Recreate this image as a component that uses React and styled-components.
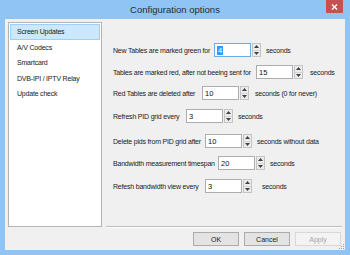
import React from "react";
import styled, { createGlobalStyle } from "styled-components";

const Global = createGlobalStyle`
  html, body { margin: 0; padding: 0; }
  body { width: 350px; height: 255px; overflow: hidden; background: #8fc4f4; }
`;

const Frame = styled.div`
  width: 350px;
  height: 255px;
  box-sizing: border-box;
  background: #8fc4f4;
  display: flex;
  flex-direction: column;
  font-family: "Liberation Sans", Arial, sans-serif;
`;

const TitleBar = styled.div`
  height: 19px;
  display: grid;
  grid-template-columns: 1fr auto 1fr;
  align-items: start;
`;

const Title = styled.div`
  grid-column: 2;
  font-size: 9.5px;
  line-height: 19px;
  color: #2b2b2b;
`;

const CloseBtn = styled.div`
  grid-column: 3;
  justify-self: end;
  margin-right: 7px;
  width: 17px;
  height: 13px;
  background: #c9504f;
  display: flex;
  align-items: center;
  justify-content: center;
`;

const Client = styled.div`
  position: relative;
  margin: 0 5px;
  height: 231px;
  background: #f0f0f0;
  display: flex;
  flex-direction: column;
`;

const Body = styled.div`
  display: flex;
  padding: 3px 3px 0 3px;
  height: 205px;
`;

const List = styled.div`
  width: 94px;
  box-sizing: border-box;
  height: 205px;
  border: 1px solid #b4b4b4;
  background: #fff;
  padding: 1px;
`;

const Item = styled.div`
  height: 15.5px;
  box-sizing: border-box;
  padding-left: 6px;
  font-size: 7px;
  letter-spacing: -0.2px;
  display: flex;
  align-items: center;
  color: #1a1a1a;
  background: ${(p) => (p.$selected ? "#cce8ff" : "transparent")};
  border: 1px solid ${(p) => (p.$selected ? "#99d1ff" : "transparent")};
`;

const Panel = styled.div`
  flex: 1;
  margin-left: 4px;
  border-bottom: 1px solid #bcbcbc;
  box-shadow: 0 1px 0 #ffffff;
  padding: 21px 0 0 7px;
  display: flex;
  flex-direction: column;
`;

const Row = styled.div`
  display: flex;
  align-items: center;
  height: 14px;
  margin-top: ${(p) => p.$mt || 0}px;
`;

const Label = styled.span`
  width: ${(p) => p.$w}px;
  flex: none;
  font-size: 7px;
  letter-spacing: -0.2px;
  color: #1a1a1a;
  white-space: nowrap;
`;

const Suffix = styled.span`
  margin-left: ${(p) => p.$ml}px;
  font-size: 7px;
  letter-spacing: -0.2px;
  color: #1a1a1a;
  white-space: nowrap;
`;

const NumBox = styled.div`
  display: flex;
  gap: 1px;
  height: 14px;
`;

const Field = styled.div`
  width: 37px;
  height: 14px;
  box-sizing: border-box;
  border: 1px solid ${(p) => (p.$focus ? "#6aaee8" : "#abadb3")};
  background: #fff;
  font-size: 7.5px;
  color: #111;
  display: flex;
  align-items: center;
  padding-left: 2px;
`;

const Sel = styled.span`
  background: #3399ff;
  color: #fff;
  padding: 0 1px;
  line-height: 9px;
`;

const Spin = styled.div`
  width: 9px;
  height: 14px;
  box-sizing: border-box;
  border: 1px solid #c4c4c4;
  background: #ececec;
  display: flex;
  flex-direction: column;
`;

const SpinHalf = styled.div`
  flex: 1;
  display: flex;
  align-items: center;
  justify-content: center;
  border-top: ${(p) => (p.$bottom ? "1px solid #d4d4d4" : "none")};
`;

const Footer = styled.div`
  flex: 1;
  display: flex;
  justify-content: flex-end;
  align-items: flex-start;
  gap: 5px;
  padding: 5px 4px 0 0;
`;

const Button = styled.div`
  width: 46px;
  height: 14px;
  box-sizing: border-box;
  border: 1px solid ${(p) => (p.$disabled ? "#d8d8d8" : "#acacac")};
  background: ${(p) => (p.$disabled ? "#f3f3f3" : "#e3e3e3")};
  color: ${(p) => (p.$disabled ? "#a6a6a6" : "#1a1a1a")};
  font-size: 7px;
  display: flex;
  align-items: center;
  justify-content: center;
`;

const Grip = styled.svg`
  position: absolute;
  right: 1px;
  bottom: 1px;
`;

function Arrow({ down }) {
  return (
    <svg width="5" height="3" viewBox="0 0 5 3">
      {down ? (
        <polygon points="0,0 5,0 2.5,3" fill="#404040" />
      ) : (
        <polygon points="0,3 5,3 2.5,0" fill="#404040" />
      )}
    </svg>
  );
}

function Spinner({ value, focus }) {
  return (
    <NumBox>
      <Field $focus={focus}>{focus ? <Sel>{value}</Sel> : value}</Field>
      <Spin>
        <SpinHalf>
          <Arrow />
        </SpinHalf>
        <SpinHalf $bottom>
          <Arrow down />
        </SpinHalf>
      </Spin>
    </NumBox>
  );
}

const rows = [
  { label: "New Tables are marked green for", w: 101, value: "4", suffix: "seconds", ml: 5, mt: 0, focus: true },
  { label: "Tables are marked red, after not beeing sent for", w: 143, value: "15", suffix: "seconds", ml: 7, mt: 8 },
  { label: "Red Tables are deleted after", w: 89, value: "10", suffix: "seconds (0 for never)", ml: 6, mt: 7 },
  { label: "Refresh PID grid every", w: 73, value: "3", suffix: "seconds", ml: 5, mt: 9 },
  { label: "Delete pids from PID grid after", w: 92, value: "10", suffix: "seconds without data", ml: 5, mt: 11 },
  { label: "Bandwidth measurement timespan", w: 105, value: "20", suffix: "seconds", ml: 5, mt: 8 },
  { label: "Refesh bandwidth view every", w: 92, value: "3", suffix: "seconds", ml: 10, mt: 9 },
];

const items = ["Screen Updates", "A/V Codecs", "Smartcard", "DVB-IPI / IPTV Relay", "Update check"];

export default function App() {
  return (
    <>
      <Global />
      <Frame>
        <TitleBar>
          <Title>Configuration options</Title>
          <CloseBtn>
            <svg width="7" height="6" viewBox="0 0 7 6">
              <path d="M1 0.5 L6 5.5 M6 0.5 L1 5.5" stroke="#fff" strokeWidth="1.4" />
            </svg>
          </CloseBtn>
        </TitleBar>
        <Client>
          <Body>
            <List>
              {items.map((t, i) => (
                <Item key={t} $selected={i === 0}>
                  {t}
                </Item>
              ))}
            </List>
            <Panel>
              {rows.map((r) => (
                <Row key={r.label} $mt={r.mt}>
                  <Label $w={r.w}>{r.label}</Label>
                  <Spinner value={r.value} focus={r.focus} />
                  <Suffix $ml={r.ml}>{r.suffix}</Suffix>
                </Row>
              ))}
            </Panel>
          </Body>
          <Footer>
            <Button>OK</Button>
            <Button>Cancel</Button>
            <Button $disabled>Apply</Button>
          </Footer>
          <Grip width="5" height="5" viewBox="0 0 5 5">
            <rect x="4" y="0" width="1" height="1" fill="#a0a0a0" />
            <rect x="2" y="2" width="1" height="1" fill="#a0a0a0" />
            <rect x="4" y="2" width="1" height="1" fill="#a0a0a0" />
            <rect x="0" y="4" width="1" height="1" fill="#a0a0a0" />
            <rect x="2" y="4" width="1" height="1" fill="#a0a0a0" />
            <rect x="4" y="4" width="1" height="1" fill="#a0a0a0" />
          </Grip>
        </Client>
      </Frame>
    </>
  );
}
